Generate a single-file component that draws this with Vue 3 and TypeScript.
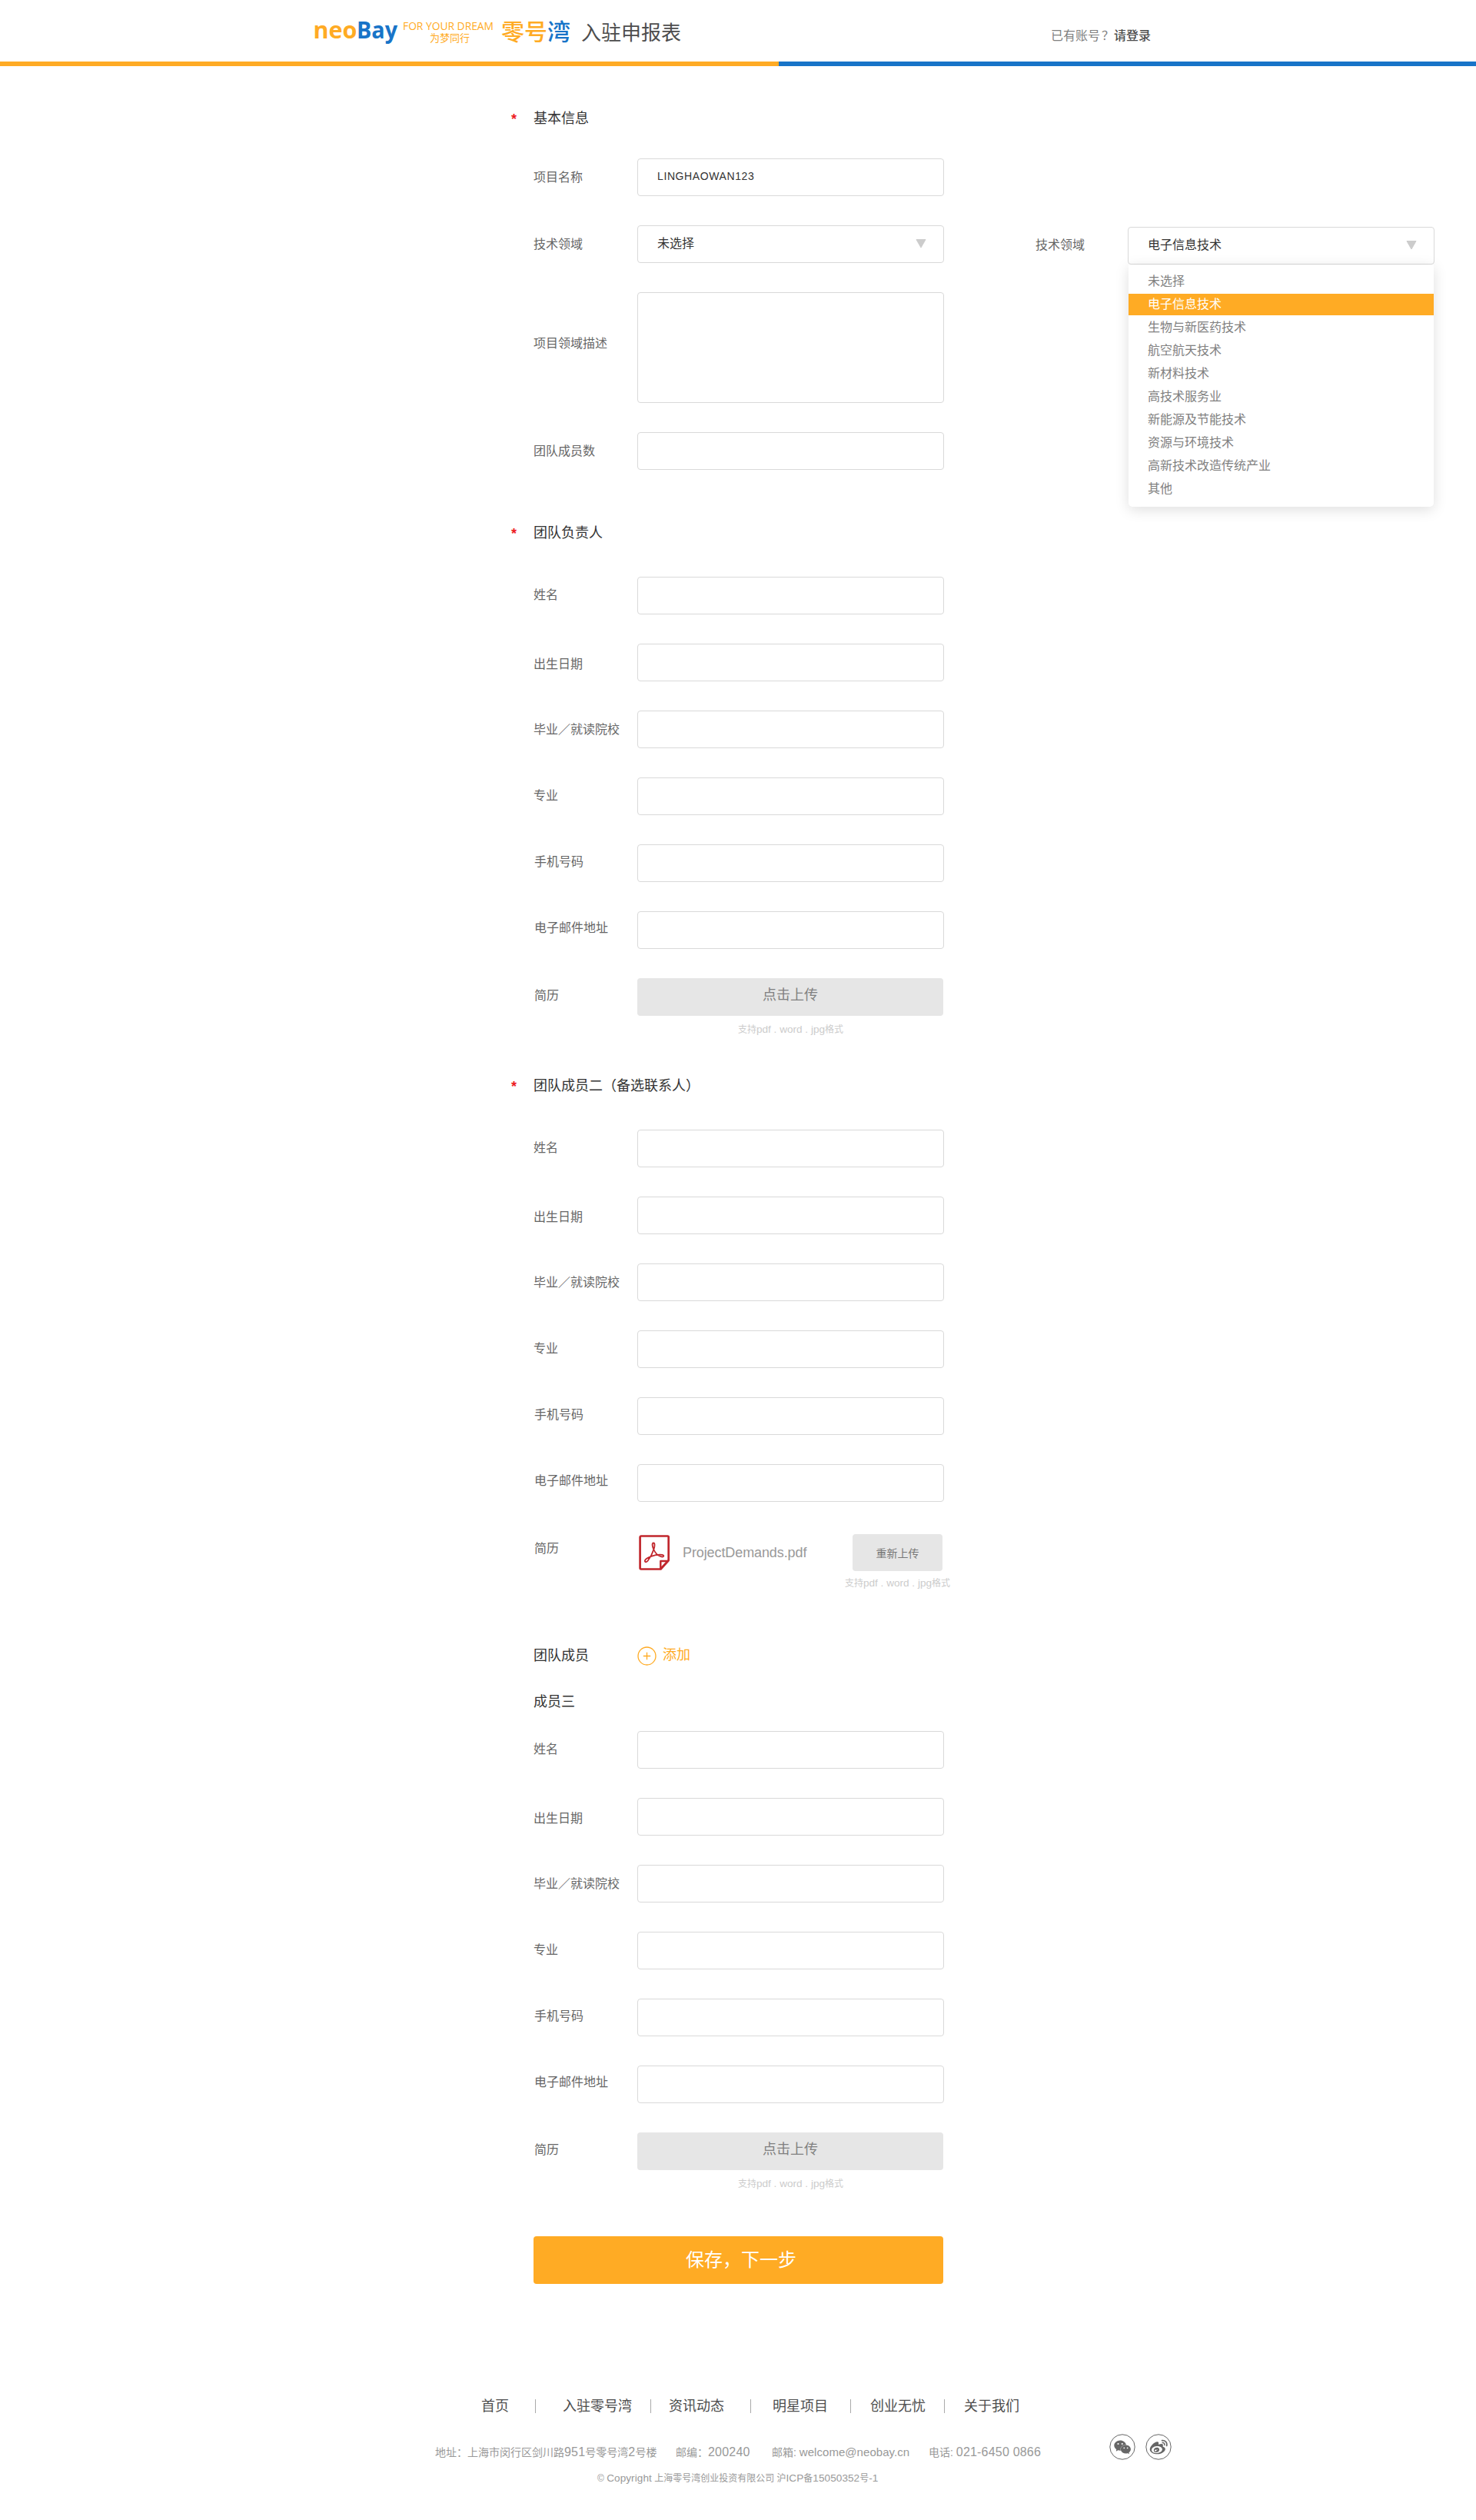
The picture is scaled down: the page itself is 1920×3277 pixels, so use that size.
<script setup lang="ts">
import { ref } from 'vue'

interface Section {
  id: string
  title: string
  resume: 'empty' | 'uploaded'
}

const projectName = ref('LINGHAOWAN123')
const selectedDomain = ref('电子信息技术')

const domains: string[] = [
  '未选择',
  '电子信息技术',
  '生物与新医药技术',
  '航空航天技术',
  '新材料技术',
  '高技术服务业',
  '新能源及节能技术',
  '资源与环境技术',
  '高新技术改造传统产业',
  '其他',
]

const personFields: string[] = ['姓名', '出生日期', '毕业／就读院校', '专业', '手机号码', '电子邮件地址']

const sections: Section[] = [
  { id: 'leader', title: '团队负责人', resume: 'empty' },
  { id: 'backup', title: '团队成员二（备选联系人）', resume: 'uploaded' },
  { id: 'member', title: '成员三', resume: 'empty' },
]

const links: string[] = ['首页', '入驻零号湾', '资讯动态', '明星项目', '创业无忧', '关于我们']
</script>

<template>
  <div class="page">
    <header class="header">
      <svg class="brand" width="345" height="80" viewBox="0 0 345 80" aria-label="neoBay 零号湾">
        <g class="brand-name">
          <text class="orange" x="6.5" y="50" textLength="57" lengthAdjust="spacingAndGlyphs">neo</text>
          <text class="blue" x="63" y="50" textLength="53" lengthAdjust="spacingAndGlyphs">Bay</text>
        </g>
        <text class="slogan orange" x="123" y="39.3" textLength="118" lengthAdjust="spacingAndGlyphs">FOR YOUR DREAM</text>
        <text class="slogan-cn orange" x="158" y="54">为梦同行</text>
        <text class="brand-cn orange" x="251" y="52.3">零号</text>
        <text class="brand-cn blue" x="311" y="52.3">湾</text>
      </svg>
      <h1 class="page-title">入驻申报表</h1>
      <p class="account">已有账号<span class="mark">？</span><a class="login">请登录</a></p>
    </header>
    <div class="stripe"><span class="stripe-orange"></span></div>

    <main class="main">
      <form class="form" @submit.prevent>
        <section>
          <h2 class="title first"><span class="star">*</span>基本信息</h2>
          <div class="fields basic">
            <div class="field">
              <span class="label">项目名称</span>
              <div class="box"><span class="latin-value">{{ projectName }}</span></div>
            </div>
            <div class="field">
              <span class="label">技术领域</span>
              <div class="box select">
                <span>未选择</span>
                <svg class="arrow" width="14" height="12" viewBox="0 0 14 12"><path d="M1 .5h12L7 11z" /></svg>
              </div>
            </div>
            <div class="field">
              <span class="label">项目领域描述</span>
              <div class="box area"></div>
            </div>
            <div class="field">
              <span class="label">团队成员数</span>
              <div class="box"></div>
            </div>
          </div>
        </section>

        <section v-for="s in sections" :key="s.id" :class="s.id">
          <div v-if="s.id === 'member'" class="add-row">
            <h2 class="add-title">团队成员</h2>
            <svg width="25" height="25" viewBox="0 0 25 25" class="plus">
              <circle cx="12.5" cy="12.5" r="11.5" />
              <path d="M7.800 12.500h9.400M12.500 7.800v9.400" />
            </svg>
            <a class="add">添加</a>
          </div>
          <h2 class="title"><span v-if="s.id !== 'member'" class="star">*</span>{{ s.title }}</h2>
          <div class="fields person">
            <div v-for="f in personFields" :key="f" class="field">
              <span class="label">{{ f }}</span>
              <div class="box"></div>
            </div>
            <div class="field">
              <span class="label">简历</span>
              <div v-if="s.resume === 'empty'">
                <div class="upload">点击上传</div>
                <p class="hint">支持<span>pdf . word . jpg</span>格式</p>
              </div>
              <div v-else class="file">
                <svg class="pdf" width="40" height="46" viewBox="0 0 40 46">
                  <path d="M3 1.5h34.5a1.2 1.2 0 0 1 1.2 1.2V33L28.5 44.5H3a1.4 1.4 0 0 1-1.4-1.4V2.9A1.4 1.4 0 0 1 3 1.5z" stroke-width="2.7" />
                  <path d="M38 34H28.3v10z" stroke-width="2.4" />
                  <path d="M19 10.5c-2.3 0-1.5 4.500.3 8.500 2 4.200 5.300 8.300 10.200 9.400 3 .6 4-1.900 1-2.500-4-.6-9.700.3-14.400 1.900-3.900 1.300-7.600 3.300-8.200 5.700-.4 2.200 2.100 2.400 3.700.3 3.300-4.300 6.300-10 8-15.500 1.100-3.600 1.600-7.800-.6-7.800z" stroke-width="1.800" />
                </svg>
                <span class="file-name">ProjectDemands.pdf</span>
                <div class="again-wrap">
                  <div class="again">重新上传</div>
                  <p class="hint">支持<span>pdf . word . jpg</span>格式</p>
                </div>
              </div>
            </div>
          </div>
        </section>

        <div class="submit">保存，下一步</div>
      </form>

      <aside class="aside">
        <span class="label">技术领域</span>
        <div class="dropdown">
          <div class="box select">
            <span>{{ selectedDomain }}</span>
            <svg class="arrow" width="14" height="12" viewBox="0 0 14 12"><path d="M1 .5h12L7 11z" /></svg>
          </div>
          <ul class="menu">
            <li v-for="d in domains" :key="d" :class="{ active: d === selectedDomain }">{{ d }}</li>
          </ul>
        </div>
      </aside>
    </main>

    <footer class="footer">
      <nav class="nav">
        <a v-for="l in links" :key="l">{{ l }}</a>
      </nav>
      <div class="info">
        <span>地址：上海市闵行区剑川路<b>951</b>号零号湾<b>2</b>号楼</span>
        <span>邮编：<b>200240</b></span>
        <span>邮箱: <i>welcome@neobay.cn</i></span>
        <span>电话: <b>021-6450 0866</b></span>
        <div class="social">
          <svg width="34" height="34" viewBox="0 0 34 34">
            <circle cx="17" cy="17" r="16.2" />
            <path transform="translate(6.3 6.500) scale(.9)" d="M8.691 2.188C3.891 2.188 0 5.476 0 9.53c0 2.212 1.17 4.203 3.002 5.55a.59.59 0 0 1 .213.665l-.39 1.48c-.019.07-.048.141-.048.213 0 .163.13.295.29.295a.326.326 0 0 0 .167-.054l1.903-1.114a.864.864 0 0 1 .717-.098 10.16 10.16 0 0 0 2.837.403c.276 0 .543-.027.811-.05-.857-2.578.157-4.972 1.932-6.446 1.703-1.415 3.882-1.98 5.853-1.838-.576-3.583-4.196-6.348-8.596-6.348zM5.785 5.991c.642 0 1.162.529 1.162 1.18a1.17 1.17 0 0 1-1.162 1.178A1.17 1.17 0 0 1 4.623 7.17c0-.651.52-1.18 1.162-1.18zm5.813 0c.642 0 1.162.529 1.162 1.18a1.17 1.17 0 0 1-1.162 1.178 1.17 1.17 0 0 1-1.162-1.178c0-.651.52-1.18 1.162-1.18zm5.34 2.867c-1.797-.052-3.746.512-5.28 1.786-1.72 1.428-2.687 3.72-1.78 6.22.942 2.453 3.666 4.229 6.884 4.229.826 0 1.622-.12 2.361-.336a.722.722 0 0 1 .598.082l1.584.926a.272.272 0 0 0 .14.047c.134 0 .24-.111.24-.247 0-.06-.023-.12-.038-.177l-.327-1.233a.582.582 0 0 1-.023-.156.49.49 0 0 1 .201-.398C23.024 18.48 24 16.82 24 14.98c0-3.21-2.931-5.837-6.656-6.088V8.89c-.135-.01-.27-.027-.407-.03zm-2.53 3.274c.535 0 .969.44.969.982a.976.976 0 0 1-.969.983.976.976 0 0 1-.969-.983c0-.542.434-.982.97-.982zm4.844 0c.535 0 .969.44.969.982a.976.976 0 0 1-.969.983.976.976 0 0 1-.969-.983c0-.542.434-.982.969-.982z" />
          </svg>
          <svg width="34" height="34" viewBox="0 0 34 34">
            <circle cx="17" cy="17" r="16.2" />
            <path transform="translate(5.700 5.500) scale(.96)" d="M10.098 20.323c-3.977.391-7.414-1.406-7.672-4.02-.259-2.609 2.759-5.047 6.74-5.441 3.979-.394 7.413 1.404 7.671 4.018.259 2.6-2.759 5.049-6.737 5.439l-.002.004zM9.05 17.219c-.384.616-1.208.884-1.829.602-.612-.279-.793-.991-.406-1.593.379-.595 1.176-.861 1.793-.601.622.263.82.972.442 1.592zm1.27-1.627c-.141.237-.449.353-.689.253-.236-.09-.313-.361-.177-.586.138-.227.436-.346.672-.24.239.09.315.36.18.601l.014-.028zm.176-2.719c-1.893-.493-4.033.45-4.857 2.118-.836 1.704-.026 3.591 1.886 4.21 1.983.64 4.318-.341 5.132-2.179.8-1.793-.201-3.642-2.161-4.149zm7.563-1.224c-.346-.105-.57-.18-.405-.615.375-.977.42-1.804 0-2.404-.781-1.112-2.915-1.053-5.364-.03 0 0-.766.331-.571-.271.376-1.217.315-2.224-.27-2.809-1.338-1.337-4.869.045-7.888 3.08C1.309 10.87 0 13.273 0 15.348c0 3.981 5.099 6.395 10.086 6.395 6.536 0 10.888-3.801 10.888-6.82 0-1.822-1.547-2.854-2.915-3.284v.01zm1.908-5.092c-.766-.856-1.908-1.187-2.96-.962-.436.09-.706.511-.616.932.09.42.511.691.932.602.511-.105 1.067.044 1.442.465.376.421.466.977.316 1.473-.136.406.089.856.51.992.405.119.857-.105.992-.512.33-1.021.12-2.178-.646-3.035l.03.045zm2.418-2.195c-1.576-1.757-3.905-2.419-6.054-1.968-.496.104-.812.587-.706 1.081.104.496.586.813 1.082.707 1.532-.331 3.185.15 4.296 1.383 1.112 1.246 1.429 2.943.947 4.416-.165.48.106 1.007.586 1.157.479.165.991-.104 1.157-.586.675-2.088.241-4.478-1.338-6.235l.03.045z" />
          </svg>
        </div>
      </div>
      <p class="copyright">© <b>Copyright</b> 上海零号湾创业投资有限公司 沪<b>ICP</b>备<b>15050352</b>号<b>-1</b></p>
    </footer>
  </div>
</template>

<style>
body {
  background: #fff;
}
</style>

<style scoped>
.page {
  width: 1920px;
  height: 3277px;
  overflow: hidden;
  background: #fff;
  color: #333;
  font-family: 'Liberation Sans', 'Noto Sans CJK SC', sans-serif;
  font-size: 16px;
  line-height: 24px;
  white-space: nowrap;
}
h1,
h2,
p,
ul {
  margin: 0;
  padding: 0;
  font-weight: 400;
  list-style: none;
}
svg {
  display: block;
  flex: none;
}

/* header */
.header {
  display: flex;
  height: 80px;
  padding-left: 401px;
}
.brand-name {
  font: 700 31px 'Open Sans', sans-serif;
}
.slogan {
  font: 400 14px 'Open Sans', sans-serif;
}
.slogan-cn {
  font: 400 13px 'Noto Sans CJK SC', sans-serif;
}
.brand-cn {
  font: 500 30px 'Noto Sans CJK SC', sans-serif;
}
.orange {
  fill: #ffab24;
}
.blue {
  fill: #1874c8;
}
.page-title {
  margin-left: 10px;
  padding-top: 26px;
  font-size: 26px;
  line-height: 34px;
  color: #4d4d4d;
}
.account {
  margin-left: 481px;
  padding-top: 35px;
  color: #808080;
}
.mark {
  margin: 0 -2px 0 2px;
}
.login {
  margin-left: 2px;
  color: #4d4d4d;
  font-weight: 500;
}
.stripe {
  display: flex;
  height: 6px;
  background: #1874c8;
}
.stripe-orange {
  width: 1013px;
  background: #ffab24;
}

/* form */
.main {
  display: flex;
  align-items: flex-start;
  padding: 55px 0 0 665px;
}
.form {
  width: 563px;
}
.title {
  display: flex;
  margin: 69px 0 44px 29px;
  font-size: 18px;
  line-height: 26px;
}
.title.first {
  margin: 0 0 39px 29px;
}
.backup .title {
  margin-top: 50px;
}
.member .title {
  margin: 34px 0 25px 29px;
}
.star {
  width: 29px;
  margin-left: -29px;
  padding-top: 3px;
  line-height: 23px;
  font-weight: 700;
  color: #ed1c24;
}
.fields {
  display: flex;
  flex-direction: column;
  gap: 38px;
  padding-left: 29px;
}
.field {
  display: grid;
  grid-template-columns: 135px 399px;
  align-items: start;
}
.label {
  padding-top: 13px;
  color: #666;
}
.basic .field:nth-child(3) .label {
  padding-top: 55px;
}
.person .field:nth-child(1) .label,
.person .field:nth-child(4) .label {
  padding-top: 12px;
}
.person .field:nth-child(2) .label {
  padding-top: 15px;
}
.person .field:nth-child(5) .label,
.person .field:nth-child(7) .label {
  padding: 11px 0 0 1px;
}
.person .field:nth-child(6) .label {
  padding: 10px 0 0 1px;
}
.box {
  display: flex;
  box-sizing: border-box;
  width: 399px;
  height: 49px;
  padding: 11px 22px 0 25px;
  border: 1px solid #d9d9d9;
  border-radius: 4px;
  background: #fff;
}
.area {
  height: 144px;
}
.latin-value {
  font-size: 14px;
  line-height: 22px;
  letter-spacing: 0.6px;
}
.select {
  justify-content: space-between;
}
.arrow {
  margin-top: 6px;
  fill: #ccc;
  stroke: #ccc;
  stroke-linejoin: round;
}
.upload {
  width: 398px;
  height: 49px;
  border-radius: 4px;
  background: #e6e6e6;
  color: #808080;
  font-size: 18px;
  line-height: 45px;
  text-align: center;
}
.hint {
  margin-top: 8px;
  font-size: 12px;
  line-height: 20px;
  color: #ccc;
  text-align: center;
}
.hint span {
  font-size: 13.6px;
}
.file {
  display: flex;
  padding-left: 2px;
}
.pdf {
  margin-top: 5px;
  fill: none;
  stroke: #c1272d;
  stroke-linejoin: round;
}
.file-name {
  width: 221px;
  padding: 16px 0 0 17px;
  box-sizing: border-box;
  font-size: 18px;
  letter-spacing: -0.1px;
  color: #999;
}
.again-wrap {
  width: 117px;
  margin-left: 17px;
  padding-top: 4px;
}
.again {
  height: 48px;
  border-radius: 4px;
  background: #e6e6e6;
  color: #777;
  font-size: 14px;
  line-height: 50px;
  text-align: center;
}
.again-wrap .hint {
  margin: 6px -20px 0;
}
.add-row {
  display: flex;
  margin: 71px 0 0 29px;
  height: 26px;
}
.add-title {
  width: 135px;
  font-size: 18px;
  line-height: 26px;
}
.plus {
  margin-top: 1px;
  fill: none;
  stroke: #ffab24;
  stroke-width: 1.3;
}
.add {
  margin-left: 8px;
  font-size: 18px;
  line-height: 25px;
  color: #ffab24;
}
.submit {
  width: 533px;
  height: 62px;
  margin: 58px 0 0 29px;
  box-sizing: border-box;
  padding-left: 198px;
  border-radius: 4px;
  background: #ffab24;
  color: #fff;
  font-size: 24px;
  line-height: 61px;
}

/* opened select */
.aside {
  display: flex;
  margin: 154px 0 0 119px;
}
.aside .label {
  width: 120px;
  padding-top: 12px;
}
.dropdown {
  position: relative;
}
.menu {
  position: absolute;
  left: 1px;
  top: 49px;
  width: 397px;
  height: 315px;
  box-sizing: border-box;
  padding-top: 8px;
  border-radius: 0 0 5px 5px;
  background: #fff;
  box-shadow: 0 4px 18px rgba(0, 0, 0, 0.13);
}
.menu li {
  height: 28px;
  margin-bottom: 2px;
  padding-left: 25px;
  line-height: 28px;
  color: #808080;
}
.menu .active {
  background: #ffab24;
  color: #fff;
}

/* footer */
.footer {
  margin-top: 145px;
}
.nav {
  display: grid;
  grid-template-columns: 70px 150px 130px 130px 122px 98px;
  padding: 5px 0 0 626px;
  height: 21px;
}
.nav a {
  height: 18px;
  padding-left: 25px;
  border-left: 1px solid #aaa;
  font-size: 18px;
  line-height: 18px;
  color: #4d4d4d;
}
.nav a:nth-child(1) {
  padding-left: 0;
  border: 0;
}
.nav a:nth-child(2) {
  padding-left: 35px;
}
.nav a:nth-child(3) {
  padding-left: 23px;
}
.nav a:nth-child(4) {
  padding-left: 28px;
}
.info {
  display: grid;
  grid-template-columns: 313px 125px 204px 235px auto;
  justify-content: start;
  margin-top: 24px;
  padding-left: 566px;
  height: 34px;
  font-size: 14px;
  color: #999;
}
.info > span {
  padding-top: 12px;
}
.info b {
  font-size: 16px;
  font-weight: 400;
  letter-spacing: 0.2px;
}
.info i {
  font-size: 15px;
  font-style: normal;
  letter-spacing: 0.05px;
}
.social {
  display: flex;
  gap: 13px;
}
.social path {
  fill: #666;
}
.social circle {
  fill: none;
  stroke: #666;
}
.copyright {
  margin: 14px 0 0 777px;
  font-size: 12px;
  line-height: 20px;
  color: #999;
}
.copyright b {
  font-size: 13.6px;
  font-weight: 400;
  letter-spacing: 0.05px;
}
</style>
